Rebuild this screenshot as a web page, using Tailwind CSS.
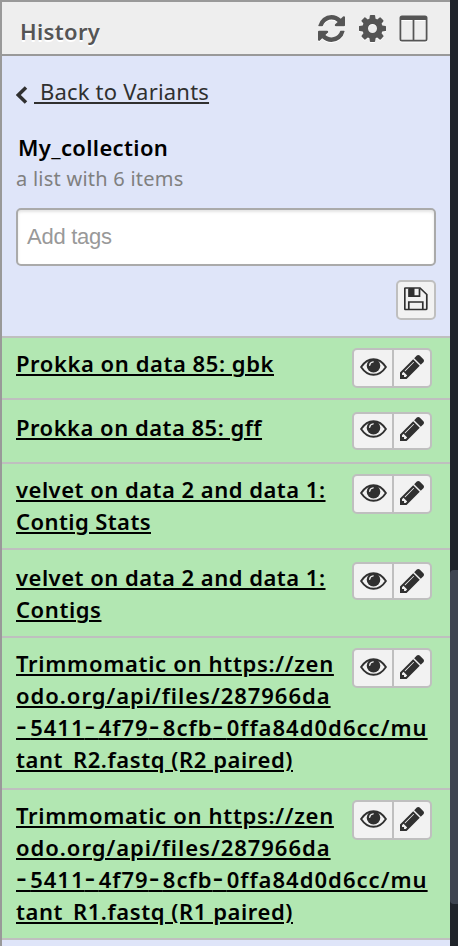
<!DOCTYPE html>
<html lang="en">
<head>
<meta charset="utf-8">
<title>History</title>
<script src="https://cdn.jsdelivr.net/npm/@tailwindcss/browser@4"></script>
</head>
<body class="w-[458px] h-[946px] overflow-hidden flex bg-[#20242b] font-['Noto_Sans','Open_Sans',sans-serif] text-[22px] leading-[32px]">
<svg class="hidden">
  <symbol id="eye" viewBox="0 0 27 18">
    <path d="M1.1 9C4.5 3.8 8.7 1.2 13.5 1.2S22.500 3.800 25.900 9C22.500 14.200 18.300 16.800 13.500 16.800S4.500 14.200 1.100 9z" fill="none" stroke="#303030" stroke-width="1.9"/>
    <circle cx="13.500" cy="7.700" r="6.800" fill="#303030"/>
    <path d="M9.700 7.300Q10 4.200 13.200 3.900" fill="none" stroke="#f2f2f2" stroke-width="1.300" stroke-linecap="round"/>
  </symbol>
  <symbol id="pencil" viewBox="0 0 1515 1515">
    <path d="M363 1408l91-91-235-235-91 91v107h128v128h107zm523-928q0-22-22-22-10 0-17 7l-542 542q-7 7-7 17 0 22 22 22 10 0 17-7l542-542q7-7 7-17zm-54-192l416 416-832 832H0v-416zm683 96q0 53-37 90l-166 166-416-416 166-165q36-38 90-38 53 0 91 38l235 234q37 39 37 91z" fill="#303030" transform="translate(0 -21)"/>
  </symbol>
</svg>
<main class="w-[450px] shrink-0 h-full border-l-2 border-t-2 border-[#999] bg-[#dfe5f9] flex flex-col">
  <header class="h-[54px] shrink-0 bg-[#eee] border-b-2 border-[#999] flex items-center pl-[18px] pr-[22px]">
    <h1 class="grow font-semibold text-[#555] tracking-[0.35px] pt-[6px] [text-shadow:0_2px_0_#fff]">History</h1>
    <div class="flex items-center gap-[14px] [filter:drop-shadow(0_1px_0_#fff)] pt-[1px]">
      <svg class="w-[27px] h-[27px]" viewBox="0 0 1536 1536" fill="#555"><path d="M1511 928q0 5-1 7-64 268-268 434.500t-478 166.500q-146 0-282.500-55t-243.500-157l-129 129q-19 19-45 19t-45-19-19-45v-448q0-26 19-45t45-19h448q26 0 45 19t19 45-19 45l-137 137q71 66 161 102t187 36q134 0 250-65t186-179q11-17 53-117 8-23 30-23h192q13 0 22.500 9.500t9.500 22.500zm25-800v448q0 26-19 45t-45 19h-448q-26 0-45-19t-19-45 19-45l138-138q-148-137-349-137-134 0-250 65t-186 179q-11 17-53 117-8 23-30 23h-199q-13 0-22.500-9.500t-9.500-22.500v-7q65-268 270-434.500t480-166.500q146 0 284 55.500t245 156.500l130-129q19-19 45-19t45 19 19 45z"/></svg>
      <svg class="w-[27px] h-[27px]" viewBox="0 0 1536 1536" fill="#555"><path d="M1024 768q0-106-75-181t-181-75-181 75-75 181 75 181 181 75 181-75 75-181zm512-109v222q0 12-8 23t-20 13l-185 28q-19 54-39 91 35 50 107 138 10 12 10 25t-9 23q-27 37-99 108t-94 71q-12 0-26-9l-138-108q-44 23-91 38-16 136-29 186-7 28-36 28h-222q-14 0-24.500-8.500t-11.500-21.500l-28-184q-49-16-90-37l-141 107q-10 9-25 9-14 0-25-11-126-114-165-168-7-10-7-23 0-12 8-23 15-21 51-66.500t54-70.500q-27-50-41-99l-183-27q-13-2-21-12.500t-8-23.500v-222q0-12 8-23t19-13l186-28q14-46 39-92-40-57-107-138-10-12-10-24 0-10 9-23 26-36 98.500-107.500t94.500-71.500q13 0 26 10l138 107q44-23 91-38 16-136 29-186 7-28 36-28h222q14 0 24.500 8.500t11.500 21.500l28 184q49 16 90 37l142-107q9-9 24-9 13 0 25 10 129 119 165 170 7 8 7 22 0 12-8 23-15 21-51 66.500t-54 70.500q26 50 41 98l183 28q13 2 21 12.500t8 23.500z"/></svg>
      <svg class="w-[29px] h-[27px] -ml-[1px]" viewBox="0 0 29 27"><path d="M3 .5h23a2.500 2.500 0 0 1 2.500 2.500v21a2.500 2.500 0 0 1-2.500 2.500H3A2.500 2.500 0 0 1 .5 24V3A2.500 2.500 0 0 1 3 .5zM2.300 5v19.200q0 .6.6.6h10.700V5zm13.100 0v19.800h10.700q.6 0 .6-.6V5z" fill="#555" fill-rule="evenodd"/></svg>
    </div>
  </header>
  <section class="h-[280px] shrink-0 pl-[14px] pr-[14px] flex flex-col">
    <a class="flex items-center mt-[19px] h-[32px] text-[#303030]">
      <svg class="w-[12px] h-[18px] mt-[7px] mr-[6px]" viewBox="0 0 12 18"><path d="M10 1.500L2.300 9l7.700 7.500" fill="none" stroke="#303030" stroke-width="3.500"/></svg>
      <span class="underline decoration-2 underline-offset-2 whitespace-pre tracking-[0.2px]">&nbsp;Back to Variants</span>
    </a>
    <h2 class="pl-[2px] mt-[24px] font-semibold text-black tracking-[0.360px]">My_collection</h2>
    <p class="mt-[1px] text-[20px] leading-[30px] text-[#808080] tracking-[0.240px]">a list with 6 items</p>
    <div class="mt-[14px] h-[58px] w-[420px] rounded-[5px] border-2 border-[#aaa] bg-white shadow-[inset_0_2px_3px_#e4e4e4] pl-[9px] flex items-center font-['Liberation_Sans',Arial,sans-serif] text-[#999] tracking-[-0.25px]">Add tags</div>
    <button class="mt-[14px] self-end w-[40px] h-[40px] rounded-[5px] border-2 border-[#bfbfbf] bg-[#f2f2f2] flex items-center justify-center">
      <svg class="w-[24px] h-[24px] -mt-[3px]" viewBox="0 0 24 24"><path d="M1.500 1H16l6.800 6.500V21.500a1 1 0 0 1-1 1H1.500a.7.700 0 0 1-.7-.7V1.700A.7.700 0 0 1 1.500 1z" fill="none" stroke="#303030" stroke-width="1.700"/><path d="M5 1.500v7.600h10.500V1.500M4.800 22v-7h14v7" fill="none" stroke="#303030" stroke-width="1.700"/><path d="M5 1h5.500v8H5z" fill="#303030"/></svg>
    </button>
  </section>
  <ul class="font-semibold text-black [&_a]:block [&_a]:h-[32px] [&_a]:whitespace-pre [&_a]:underline [&_a]:decoration-2 [&_a]:underline-offset-2 [&_i]:not-italic [&_i]:font-normal [&_i]:font-['DejaVu_Sans'] [&_i]:text-[30px] [&_i]:leading-[0] [&_i]:tracking-[3.300px]">
    <li class="relative h-[62px] bg-[#b2e7b2] border-t-2 border-[#bfbfbf] pl-[14px] pt-[9px]">
      <a class="tracking-[0.563px]">Prokka on data 85: gbk</a>
      <div class="absolute right-[18px] top-[10px] w-[80px] h-[40px] rounded-[5px] border-2 border-[#bfbfbf] bg-[#f2f2f2] flex"><span class="w-[40px] border-r-2 border-[#bfbfbf] pl-[6px] pt-[8px]"><svg class="w-[27px] h-[18px]"><use href="#eye"/></svg></span><span class="pl-[6px] pt-[5px]"><svg class="w-[24px] h-[24px]"><use href="#pencil"/></svg></span></div>
    </li>
    <li class="relative h-[64px] bg-[#b2e7b2] border-t-2 border-[#bfbfbf] pl-[14px] pt-[11px]">
      <a class="tracking-[0.491px]">Prokka on data 85: gff</a>
      <div class="absolute right-[18px] top-[12px] w-[80px] h-[38px] rounded-[5px] border-2 border-[#bfbfbf] bg-[#f2f2f2] flex"><span class="w-[40px] border-r-2 border-[#bfbfbf] pl-[6px] pt-[6px]"><svg class="w-[27px] h-[18px]"><use href="#eye"/></svg></span><span class="pl-[6px] pt-[3px]"><svg class="w-[24px] h-[24px]"><use href="#pencil"/></svg></span></div>
    </li>
    <li class="relative h-[86px] bg-[#b2e7b2] border-t-2 border-[#bfbfbf] pl-[14px] pt-[9px]">
      <a class="tracking-[0.493px]">velvet on data 2 and data 1:</a>
      <a class="tracking-[0.418px]">Contig Stats</a>
      <div class="absolute right-[18px] top-[10px] w-[80px] h-[40px] rounded-[5px] border-2 border-[#bfbfbf] bg-[#f2f2f2] flex"><span class="w-[40px] border-r-2 border-[#bfbfbf] pl-[6px] pt-[8px]"><svg class="w-[27px] h-[18px]"><use href="#eye"/></svg></span><span class="pl-[6px] pt-[5px]"><svg class="w-[24px] h-[24px]"><use href="#pencil"/></svg></span></div>
    </li>
    <li class="relative h-[88px] bg-[#b2e7b2] border-t-2 border-[#bfbfbf] pl-[14px] pt-[11px]">
      <a class="tracking-[0.493px]">velvet on data 2 and data 1:</a>
      <a class="tracking-[0.580px]">Contigs</a>
      <div class="absolute right-[18px] top-[12px] w-[80px] h-[38px] rounded-[5px] border-2 border-[#bfbfbf] bg-[#f2f2f2] flex"><span class="w-[40px] border-r-2 border-[#bfbfbf] pl-[6px] pt-[8px]"><svg class="w-[27px] h-[18px]"><use href="#eye"/></svg></span><span class="pl-[6px] pt-[5px]"><svg class="w-[24px] h-[24px]"><use href="#pencil"/></svg></span></div>
    </li>
    <li class="relative h-[152px] bg-[#b2e7b2] border-t-2 border-[#bfbfbf] pl-[14px] pt-[9px]">
      <a class="tracking-[0.690px]">Trimmomatic on https://zen</a>
      <a class="tracking-[0.970px]">odo.org/api/files/287966da</a>
      <a class="tracking-[1.020px]"><i>-</i>5411<i>-</i>4f79<i>-</i>8cfb<i>-</i>0ffa84d0d6cc/mu</a>
      <a class="tracking-[0.579px]">tant_R2.fastq (R2 paired)</a>
      <div class="absolute right-[18px] top-[10px] w-[80px] h-[40px] rounded-[5px] border-2 border-[#bfbfbf] bg-[#f2f2f2] flex"><span class="w-[40px] border-r-2 border-[#bfbfbf] pl-[6px] pt-[8px]"><svg class="w-[27px] h-[18px]"><use href="#eye"/></svg></span><span class="pl-[6px] pt-[5px]"><svg class="w-[24px] h-[24px]"><use href="#pencil"/></svg></span></div>
    </li>
    <li class="relative h-[152px] bg-[#b2e7b2] border-y-2 border-[#bfbfbf] pl-[14px] pt-[9px]">
      <a class="tracking-[0.690px]">Trimmomatic on https://zen</a>
      <a class="tracking-[0.970px]">odo.org/api/files/287966da</a>
      <a class="tracking-[1.020px]"><i>-</i>5411<i>-</i>4f79<i>-</i>8cfb<i>-</i>0ffa84d0d6cc/mu</a>
      <a class="tracking-[0.579px]">tant_R1.fastq (R1 paired)</a>
      <div class="absolute right-[18px] top-[10px] w-[80px] h-[40px] rounded-[5px] border-2 border-[#bfbfbf] bg-[#f2f2f2] flex"><span class="w-[40px] border-r-2 border-[#bfbfbf] pl-[6px] pt-[8px]"><svg class="w-[27px] h-[18px]"><use href="#eye"/></svg></span><span class="pl-[6px] pt-[5px]"><svg class="w-[24px] h-[24px]"><use href="#pencil"/></svg></span></div>
    </li>
  </ul>
</main>
<aside class="grow pt-[570px]"><div class="h-[334px] w-[12px] rounded-[4px] bg-[#3e4450]"></div></aside>
</body>
</html>
